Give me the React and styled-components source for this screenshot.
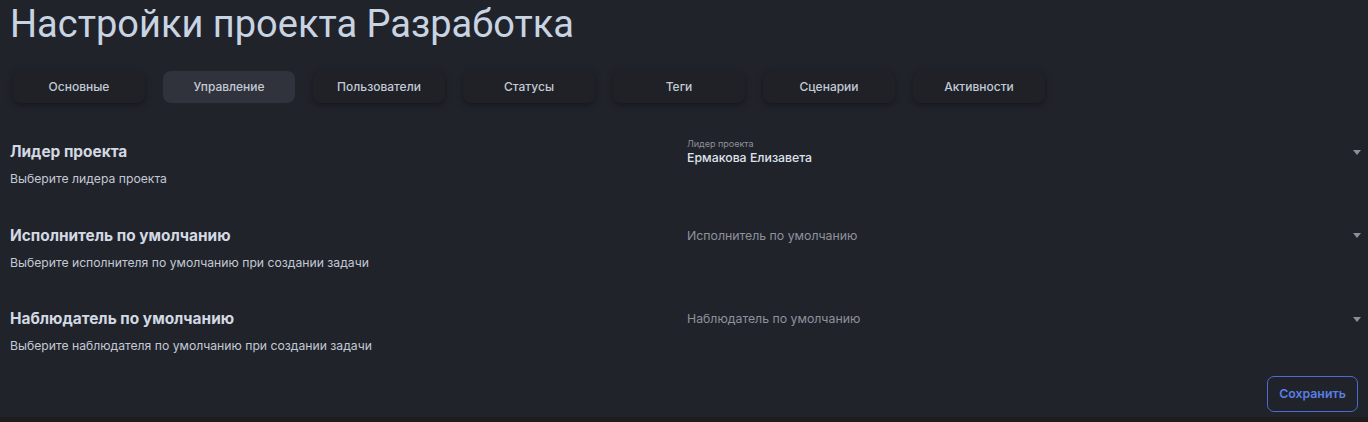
import React, { useState } from "react";
import styled, { createGlobalStyle } from "styled-components";

const GlobalStyle = createGlobalStyle`
  html, body {
    margin: 0;
    padding: 0;
    background: #1e1c1d;
  }
  body {
    font-family: Inter, "Noto Sans", sans-serif;
  }
`;

const Page = styled.div`
  background: #21232b;
  min-height: 417px;
  padding: 0 10px 5px 10px;
  box-sizing: border-box;
  display: flex;
  flex-direction: column;
`;

const Title = styled.h1`
  margin: 0;
  font-family: Roboto, "Noto Sans", sans-serif;
  font-weight: 400;
  font-size: 38px;
  line-height: 48px;
  color: #c9d4e2;
`;

const Tabs = styled.div`
  display: flex;
  gap: 18px;
  margin-top: 23px;
  padding-left: 3px;
`;

const Tab = styled.button`
  width: 132px;
  height: 32px;
  border: none;
  border-radius: 8px;
  background: ${(p) => (p.$active ? "#30333b" : "#1f2127")};
  box-shadow: ${(p) => (p.$active ? "none" : "0 2px 6px rgba(0, 0, 0, 0.35)")};
  color: #c3cad6;
  font-family: Inter, "Noto Sans", sans-serif;
  font-size: 12px;
  font-weight: 500;
  cursor: pointer;
  padding: 0 0 2px 0;
`;

const Sections = styled.div`
  display: flex;
  flex-direction: column;
  gap: 37.5px;
  margin-top: 39px;
`;

const Row = styled.div`
  display: grid;
  grid-template-columns: 677px 1fr;
`;

const Info = styled.div`
  display: flex;
  flex-direction: column;
  gap: 8px;
`;

const Heading = styled.div`
  font-size: 15.4px;
  line-height: 20px;
  font-weight: 700;
  color: #d3d9e2;
`;

const Hint = styled.div`
  font-size: 12.2px;
  line-height: 18px;
  color: #c3c9d4;
`;

const Field = styled.div`
  height: 28px;
  margin-top: -4px;
  display: flex;
  align-items: center;
  cursor: pointer;
`;

const FieldText = styled.div`
  flex: 1;
  display: flex;
  flex-direction: column;
  justify-content: center;
`;

const FieldLabel = styled.div`
  font-size: 9px;
  line-height: 12px;
  color: #8c919a;
`;

const FieldValue = styled.div`
  font-size: 12.3px;
  line-height: 16px;
  font-weight: 500;
  color: #dde2ea;
`;

const Placeholder = styled.div`
  font-size: 12.3px;
  line-height: 20px;
  color: #8d929b;
`;

const Arrow = styled.svg`
  width: 8px;
  height: 5px;
  margin-right: -3px;
  fill: #8a8f99;
`;

const Footer = styled.div`
  display: flex;
  justify-content: flex-end;
  margin-top: auto;
`;

const SaveButton = styled.button`
  width: 91px;
  height: 36px;
  border: 1.5px solid #4d6bd0;
  border-radius: 7px;
  background: transparent;
  color: #5a7ee6;
  font-family: Inter, "Noto Sans", sans-serif;
  font-size: 12.3px;
  font-weight: 600;
  cursor: pointer;
  padding: 0 0 2px 0;
`;

const tabs = [
  "Основные",
  "Управление",
  "Пользователи",
  "Статусы",
  "Теги",
  "Сценарии",
  "Активности",
];

const sections = [
  {
    title: "Лидер проекта",
    hint: "Выберите лидера проекта",
    label: "Лидер проекта",
    value: "Ермакова Елизавета",
  },
  {
    title: "Исполнитель по умолчанию",
    hint: "Выберите исполнителя по умолчанию при создании задачи",
    label: "Исполнитель по умолчанию",
  },
  {
    title: "Наблюдатель по умолчанию",
    hint: "Выберите наблюдателя по умолчанию при создании задачи",
    label: "Наблюдатель по умолчанию",
  },
];

function Select({ label, value }) {
  return (
    <Field>
      <FieldText>
        {value ? (
          <>
            <FieldLabel>{label}</FieldLabel>
            <FieldValue>{value}</FieldValue>
          </>
        ) : (
          <Placeholder>{label}</Placeholder>
        )}
      </FieldText>
      <Arrow viewBox="0 0 8 5">
        <path d="M0 0h8L4 5z" />
      </Arrow>
    </Field>
  );
}

export default function App() {
  const [active, setActive] = useState(1);
  return (
    <>
      <GlobalStyle />
      <Page>
        <Title>Настройки проекта Разработка</Title>
        <Tabs>
          {tabs.map((t, i) => (
            <Tab key={t} $active={i === active} onClick={() => setActive(i)}>
              {t}
            </Tab>
          ))}
        </Tabs>
        <Sections>
          {sections.map((s) => (
            <Row key={s.title}>
              <Info>
                <Heading>{s.title}</Heading>
                <Hint>{s.hint}</Hint>
              </Info>
              <Select label={s.label} value={s.value} />
            </Row>
          ))}
        </Sections>
        <Footer>
          <SaveButton>Сохранить</SaveButton>
        </Footer>
      </Page>
    </>
  );
}
